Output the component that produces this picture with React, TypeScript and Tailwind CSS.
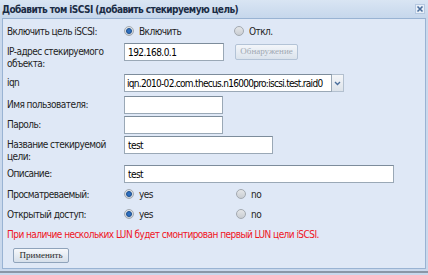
import type { ReactNode } from 'react'

const FONT = { fontFamily: '"DejaVu Sans Condensed", "DejaVu Sans", Tahoma, sans-serif', fontStretch: 'condensed' }
const SERIF = { fontFamily: '"Liberation Serif", "Times New Roman", serif', letterSpacing: 0 }

function Radio({ checked, label }: { checked?: boolean; label: string }) {
  return (
    <span className="flex items-center gap-[5px]">
      <span className="w-[10px] h-[10px] rounded-full border border-[#a3a9b0] bg-gradient-to-b from-[#e4e6e8] to-[#c9cdd2] flex items-center justify-center">
        {checked && <span className="w-[6px] h-[6px] rounded-full bg-[#2f6fbf] border border-[#1c4f8e]" />}
      </span>
      <span>{label}</span>
    </span>
  )
}

function Input({ w, value }: { w: string; value?: string }) {
  return (
    <div className={`${w} h-[18px] bg-white border border-[#9aa8b6] border-t-[#7d8c9b] px-[3px] flex items-center text-black`}>
      {value}
    </div>
  )
}

function Row({ label, h, mt, children }: { label: ReactNode; h: string; mt: string; children: ReactNode }) {
  return (
    <div className={`flex ${h} ${mt}`}>
      <div className="w-[117px] shrink-0 pt-[3px] leading-[12px] whitespace-nowrap">{label}</div>
      <div className="flex-1 flex items-start">{children}</div>
    </div>
  )
}

export default function App() {
  return (
    <div className="w-[428px] h-[275px] bg-[#c9d8ec] text-[10px] tracking-[-0.55px] text-[#1e1e1e]" style={FONT}>
      {/* заголовок окна */}
      <div className="h-[18px] flex items-center justify-between pl-[2px] pr-[2px] bg-gradient-to-b from-[#d9e5f3] to-[#c6d7ec]">
        <span className="font-bold text-[#1b2c45]">Добавить том iSCSI (добавить стекируемую цель)</span>
        <span className="w-[10px] h-[10px] mr-[1px] bg-[#e8eff8] border border-[#b5c8e0] flex items-center justify-center">
          <svg width="8" height="8" viewBox="0 0 8 8">
            <path d="M1.5 1.5 L6.5 6.5 M6.5 1.5 L1.5 6.5" stroke="#4a6e9c" strokeWidth="1.6" />
          </svg>
        </span>
      </div>

      <div className="ml-[2px] w-[424px] h-[251px] bg-[#dfe8f6] border border-[#99b3d3] pl-[4px]">
        <div className="flex h-[18px] mt-[3px] items-center">
          <div className="w-[117px] shrink-0">Включить цель iSCSI:</div>
          <div className="w-[110px]"><Radio checked label="Включить" /></div>
          <Radio label="Откл." />
        </div>

        <Row label={<>IP-адрес стекируемого<br />объекта:</>} h="h-[28px]" mt="mt-[3px]">
          <Input w="w-[100px]" value="192.168.0.1" />
          <div
            className="ml-[11px] mt-[1px] w-[63px] h-[16px] rounded-[2px] border border-[#b3c3d6] bg-gradient-to-b from-[#f3f6fa] to-[#dbe3ec] flex items-center justify-center text-[9px] text-[#a0a8b2]"
            style={SERIF}
          >
            Обнаружение
          </div>
        </Row>

        <Row label="iqn" h="h-[18px]" mt="mt-[3px]">
          <div className="flex h-[18px]">
            <div className="w-[208px] h-[18px] bg-white border border-[#9aa8b6] border-t-[#7d8c9b] px-[2px] flex items-center whitespace-nowrap overflow-hidden text-black tracking-[-0.7px]">
              iqn.2010-02.com.thecus.n16000pro:iscsi.test.raid0
            </div>
            <div className="w-[12px] h-[18px] border border-l-0 border-[#b3c0cf] bg-gradient-to-b from-[#f4f6f9] to-[#dde3ea] flex items-center justify-center">
              <svg width="7" height="5" viewBox="0 0 7 5">
                <path d="M1 1 L3.5 3.5 L6 1" stroke="#4a6e9c" strokeWidth="1.4" fill="none" />
              </svg>
            </div>
          </div>
        </Row>

        <Row label="Имя пользователя:" h="h-[18px]" mt="mt-[4px]">
          <Input w="w-[99px]" />
        </Row>

        <Row label="Пароль:" h="h-[18px]" mt="mt-[2px]">
          <Input w="w-[99px]" />
        </Row>

        <Row label={<>Название стекируемой<br />цели:</>} h="h-[26px]" mt="mt-[2px]">
          <Input w="w-[149px]" value="test" />
        </Row>

        <Row label="Описание:" h="h-[18px]" mt="mt-[3px]">
          <Input w="w-[270px]" value="test" />
        </Row>

        <div className="flex h-[18px] mt-[2px] items-center">
          <div className="w-[117px] shrink-0">Просматреваемый:</div>
          <div className="w-[112px]"><Radio checked label="yes" /></div>
          <Radio label="no" />
        </div>

        <div className="flex h-[18px] mt-[2px] items-center">
          <div className="w-[117px] shrink-0">Открытый доступ:</div>
          <div className="w-[112px]"><Radio checked label="yes" /></div>
          <Radio label="no" />
        </div>

        <div className="h-[18px] mt-[2px] flex items-center text-[#f0141e]">
          При наличие нескольких LUN будет смонтирован первый LUN цели iSCSI.
        </div>

        <div
          className="ml-[6px] mt-[5px] w-[56px] h-[15px] rounded-[2px] border border-[#8fa3bb] bg-gradient-to-b from-[#f6f8fb] to-[#d6dfea] flex items-center justify-center text-[9px] text-[#2a2a2a]"
          style={SERIF}
        >
          Применить
        </div>
      </div>
      <div className="mt-[2px] h-[2px] bg-[#8a96a6]" />
    </div>
  )
}
